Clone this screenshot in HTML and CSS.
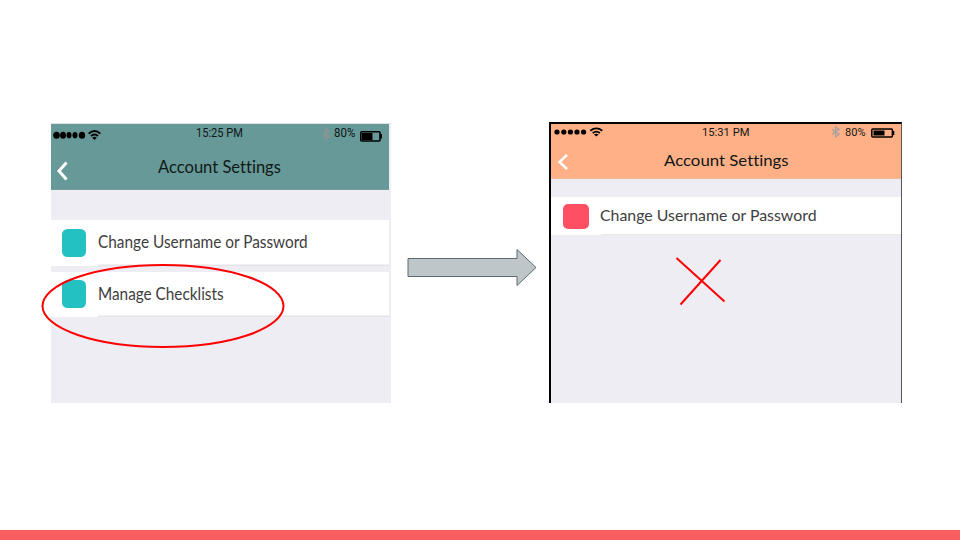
FILE: index.html
```html
<!DOCTYPE html>
<html lang="en">
<head>
<meta charset="utf-8">
<title>Account Settings</title>
<link rel="stylesheet" href="styles.css">
</head>
<body>
<main class="slide">
  <section class="phone before">
    <header class="bar">
      <div class="status">
        <svg class="signal" width="50" height="14" viewBox="0 0 50 14">
          <g fill="#000"><ellipse cx="5.5" cy="7.2" rx="3.3" ry="3.5"/><ellipse cx="12" cy="7.2" rx="3" ry="3.5"/><ellipse cx="18" cy="7.2" rx="2.5" ry="3.1"/><ellipse cx="24" cy="7.2" rx="2.5" ry="3.1"/><ellipse cx="31" cy="7.2" rx="3.2" ry="3.5"/></g>
          <path d="M37.7 5.6Q43.5 .2 49.3 5.6M40 8Q43.5 4.9 47 8" fill="none" stroke="#000" stroke-width="1.9"/><path d="M41.2 9.7Q43.5 8 45.8 9.7L43.5 12.1Z"/>
        </svg>
        <span class="clock"><span class="fit">15:25 PM</span></span>
        <svg class="bluetooth" width="8" height="14" viewBox="0 0 8 14"><path d="M1 4L7 10L4 13V1L7 4L1 10" fill="none" stroke="#8f9493" stroke-width="1.3"/></svg>
        <span class="percent"><span class="fit">80%</span></span>
        <svg class="battery" width="22" height="12" viewBox="0 0 22 12"><rect x=".8" y=".8" width="19.2" height="9.2" rx="1" fill="none" stroke="#000" stroke-width="1.6"/><path d="M2 2h10.5v7H2zM20.3 3h1.7v4.6h-1.7z"/></svg>
      </div>
      <div class="nav">
        <svg class="back" width="12" height="20" viewBox="0 0 12 20"><path d="M10.5 1.5L3 10L10.5 18.5" fill="none" stroke="#fff" stroke-width="3"/></svg>
        <h1 class="title"><span class="fit">Account Settings</span></h1>
      </div>
    </header>
    <div class="list">
      <div class="row"><i class="swatch"></i><span class="label user"><span class="fit">Change Username or Password</span></span></div>
      <div class="row"><i class="swatch"></i><span class="label lists"><span class="fit">Manage Checklists</span></span></div>
    </div>
    <svg class="ring" width="246" height="86" viewBox="0 0 246 86"><ellipse cx="123" cy="43" rx="120.5" ry="41" fill="none" stroke="#f00" stroke-width="2"/></svg>
  </section>
  <svg class="arrow" width="131" height="40" viewBox="0 0 131 40"><path d="M1 11.5H110V2.5L129 20.5L110 38.5V29.5H1Z" fill="#bfc6ca" stroke="#5d6b70" stroke-width="1"/></svg>
  <section class="phone after">
    <header class="bar">
      <div class="status">
        <svg class="signal" width="50" height="12" viewBox="0 0 50 12">
          <g fill="#000"><circle cx="6" cy="6" r="2.6"/><circle cx="12.8" cy="6" r="2.6"/><circle cx="19.4" cy="6" r="2.6"/><circle cx="26" cy="6" r="2.6"/><circle cx="32.6" cy="6" r="2.6"/></g>
          <path d="M39.3 4.7Q45.3 .2 51.3 4.7M41.7 7Q45.3 4.3 48.9 7" fill="none" stroke="#000" stroke-width="1.8"/><path d="M43 8.6Q45.3 7 47.6 8.6L45.3 10.5Z"/>
        </svg>
        <span class="clock"><span class="fit">15:31 PM</span></span>
        <svg class="bluetooth" width="9" height="12" viewBox="0 0 9 12"><path d="M1 3.3L8 8.3L4.6 11V1L8 3.3L1 8.3" fill="none" stroke="#a3a29f" stroke-width="1.3"/></svg>
        <span class="percent"><span class="fit">80%</span></span>
        <svg class="battery" width="24" height="10" viewBox="0 0 24 10"><rect x=".8" y="1" width="20.6" height="8" rx="1" fill="none" stroke="#000" stroke-width="1.5"/><path d="M2.5 2.4h11v5.2h-11zM21.5 3h1.8v4h-1.8z"/></svg>
      </div>
      <div class="nav">
        <svg class="back" width="12" height="16" viewBox="0 0 12 16"><path d="M10 1L2.5 8L10 15" fill="none" stroke="#fff" stroke-width="2.5"/></svg>
        <h1 class="title"><span class="fit">Account Settings</span></h1>
      </div>
    </header>
    <div class="list">
      <div class="row"><i class="swatch"></i><span class="label user"><span class="fit">Change Username or Password</span></span></div>
    </div>
    <svg class="cross" width="52" height="50" viewBox="0 0 52 50"><path d="M2.5 3L50.5 46.5M46.5 5L6.5 49.5" fill="none" stroke="#f00" stroke-width="2"/></svg>
  </section>
</main>
<footer class="strip"></footer>
<script src="fit.js"></script>
</body>
</html>
```
FILE: styles.css
```css
* { box-sizing: border-box; }
body {
  margin: 0;
  width: 960px;
  height: 540px;
  overflow: hidden;
  display: flex;
  flex-direction: column;
  background: #fff;
  font-family: Roboto, "Liberation Sans", sans-serif;
}
.slide { flex: 1; display: flex; align-items: flex-start; padding: 122px 58px 0 51px; }
.strip { height: 10px; background: #f65e5f; }
svg { display: block; flex: none; overflow: visible; }
.phone { position: relative; background: #eeedf4; flex: none; }
.before { width: 339.5px; height: 280px; margin-top: 1px; padding-right: 2px; border-top: 1px solid #dbe3e5; }
.after { width: 353px; height: 281px; margin-left: 11.5px; border: solid #000; border-width: 2px 1px 0 2px; border-right-color: #555; }
.arrow { margin: 125px 0 0 16px; }
.bar { color: #101817; }
.before .bar { height: 66px; background: #679998; border-bottom: 1px solid #789f9f; }
.after .bar { height: 55px; background: #ffb087; border-bottom: 1px solid #f4b999; }
.status, .nav, .row { display: flex; align-items: center; }
.fit { display: inline-block; white-space: nowrap; transform-origin: 0 50%; }
.title, .label { font-family: Lato, "Open Sans", sans-serif; font-weight: 400; margin: 0; font-variant-ligatures: none; }
.before .status { height: 20px; }
.before .signal { margin-top: 2px; }
.before .clock { width: 47px; margin: -2px 0 0 95px; font-size: 12px; }
.before .bluetooth { margin: 0 4px 0 79px; }
.before .percent { width: 21px; margin-top: -2px; font-size: 12px; }
.before .battery { margin: 5px 0 0 5px; }
.before .nav { height: 46px; padding-left: 5px; }
.before .back { margin-top: 7px; }
.before .title { width: 123px; margin-left: 90px; font-size: 17.5px; line-height: 40px; }
.after .status { height: 16px; }
.after .clock { width: 48px; margin-left: 101px; font-size: 10.5px; }
.after .bluetooth { margin: 0 5px 0 81px; }
.after .percent { width: 21px; font-size: 10.5px; }
.after .battery { margin: 2px 0 0 5px; }
.after .nav { height: 38px; padding-left: 6px; }
.after .back { margin-top: 6px; }
.after .title { width: 125px; margin: 4px 0 0 95px; font-size: 14.5px; line-height: 30px; }
.list { display: flex; flex-direction: column; }
.before .list { padding-top: 30px; gap: 6px; }
.row { background: linear-gradient(#fff, #fff) 0 0 / 100% calc(100% - 1.5px) no-repeat, linear-gradient(90deg, #fff 47px, #e4e4e8 47px); color: #3e3e41; }
.before .row { height: 45.5px; padding-left: 10.5px; }
.swatch { flex: none; }
.before .swatch { width: 24.5px; height: 28px; border-radius: 5.5px; background: #23c1c1; }
.before .label { margin: -2px 0 0 12px; font-size: 17.5px; }
.before .user { width: 210px; }
.before .lists { width: 126px; }
.after .list { padding-top: 18px; }
.after .row { height: 38px; padding-left: 12px; background: linear-gradient(#fff, #fff) 0 0 / 100% calc(100% - 1px) no-repeat, linear-gradient(90deg, #fff 50px, #e7e7ec 50px); }
.after .swatch { width: 26px; height: 25px; border-radius: 5px; background: #ff5063; }
.after .label { width: 217px; margin: -2px 0 0 11px; font-size: 15px; }
.ring { position: absolute; left: -11px; top: 138.5px; }
.cross { position: absolute; left: 123px; top: 131px; }
```
FILE: fit.js
```js
// Stretch or condense each label to the width of its slot.
document.fonts.ready.then(() => {
  document.querySelectorAll('.fit').forEach((el) => {
    const slot = el.parentElement.getBoundingClientRect().width;
    el.style.transform = `scaleX(${slot / el.offsetWidth})`;
  });
});
```
